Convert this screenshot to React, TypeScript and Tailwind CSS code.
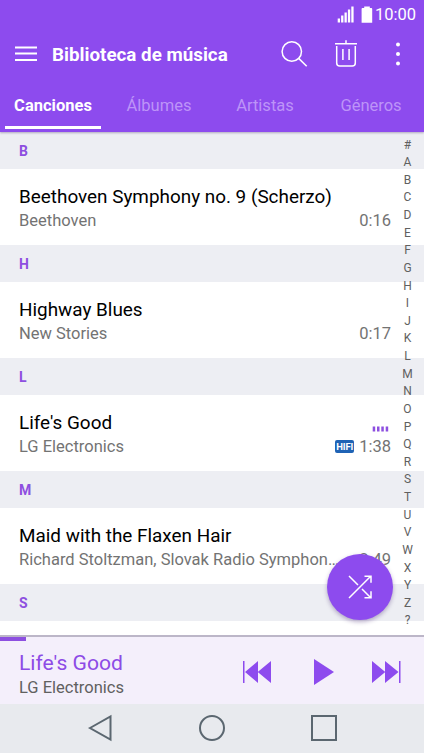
type Song = {
  letter: string;
  title: string;
  artist: string;
  duration: string;
  hifi?: boolean;
  playing?: boolean;
};

const songs: Song[] = [
  { letter: "B", title: "Beethoven Symphony no. 9 (Scherzo)", artist: "Beethoven", duration: "0:16" },
  { letter: "H", title: "Highway Blues", artist: "New Stories", duration: "0:17" },
  { letter: "L", title: "Life's Good", artist: "LG Electronics", duration: "1:38", hifi: true, playing: true },
  { letter: "M", title: "Maid with the Flaxen Hair", artist: "Richard Stoltzman, Slovak Radio Symphon…", duration: "2:49" },
];

const tabs = ["Canciones", "Álbumes", "Artistas", "Géneros"];

const indexLetters = "#ABCDEFGHIJKLMNOPQRSTUVWXYZ?".split("");

function StatusBar() {
  return (
    <div className="flex h-[30px] items-center justify-end pr-2 text-white">
      <svg width="18" height="18" viewBox="0 0 18 18" fill="currentColor">
        <path d="M0.7 12.500h2.300v4H0.700zM4.100 9.500h2.300v7H4.100zM7.500 6.500h2.300v10H7.500zM10.900 3.500h2.300v13h-2.300zM14.300 0.500h2.300v16h-2.300z" />
      </svg>
      <svg className="ml-[6px]" width="12" height="18" viewBox="0 0 12 18" fill="currentColor">
        <path d="M3.2 .5h5.6v1.6h1.6q.8 0 .8.8V16.700H.6V2.900q0-.8.8-.8h1.8z" />
      </svg>
      <span className="ml-[2px] text-[16.5px] leading-[30px]">10:00</span>
    </div>
  );
}

function Toolbar() {
  return (
    <div className="flex h-12 items-center pl-[15px] text-white">
      <svg width="22" height="16" viewBox="0 0 22 16" stroke="currentColor" strokeWidth="2">
        <path d="M0 1.500h22M0 7.500h22M0 14h22" />
      </svg>
      <h1 className="ml-[15px] flex-1 pt-0.5 text-[18.8px] font-bold">Biblioteca de música</h1>
      <svg width="28" height="28" viewBox="0 0 28 28" fill="none" stroke="currentColor" strokeWidth="1.5">
        <circle cx="11.8" cy="11.5" r="9.7" />
        <path d="M18.7 18.4l8 7.8" />
      </svg>
      <svg className="ml-[26px]" width="24" height="28" viewBox="0 0 24 28" fill="none" stroke="currentColor" strokeWidth="1.5">
        <path d="M1 3.7h22M12 0.3v3.4M2.7 6v17q0 3 3 3h12.600q3 0 3-3V6M8.900 9v11M15.100 9v11" />
      </svg>
      <svg className="mr-[23px] ml-[37px]" width="6" height="24" viewBox="0 0 6 24" fill="currentColor">
        <circle cx="3" cy="2.500" r="2" />
        <circle cx="3" cy="12" r="2" />
        <circle cx="3" cy="21.500" r="2" />
      </svg>
    </div>
  );
}

function Tabs() {
  return (
    <nav className="grid h-[54px] grid-cols-4 text-[16.5px]">
      {tabs.map((tab, i) => (
        <div
          key={tab}
          className={
            i === 0
              ? "relative text-center leading-[55px] font-bold text-white"
              : "relative text-center leading-[55px] text-[#bd94f8]"
          }
        >
          {tab}
          {i === 0 && <span className="absolute bottom-[4px] left-[5px] h-[3px] w-24 bg-white" />}
        </div>
      ))}
    </nav>
  );
}

function SectionHeader({ letter }: { letter: string }) {
  return (
    <div className="h-[37px] bg-[#edeef3] pl-[19px] text-[14px] leading-[38px] font-bold text-[#8d4fe0]">
      {letter}
    </div>
  );
}

function SongRow({ song }: { song: Song }) {
  return (
    <div className="h-[76px] pt-4 pr-[33px] pl-[19px]">
      <div className="text-[18.900px] leading-6 whitespace-nowrap text-black">{song.title}</div>
      <div className="flex items-center text-[16.5px] leading-[23px] whitespace-nowrap text-[#737373]">
        <span>{song.artist}</span>
        <span className="relative ml-auto flex shrink-0 items-center">
          {song.playing && (
            <svg className="absolute -top-[9px] right-[2px]" width="17" height="6" viewBox="0 0 17 6" fill="#8d4fe0">
              <path d="M0.700 .5h2.500v5H0.700zM5 .5h2.500v5H5zM9.300 .5h2.500v5H9.300zM13.700 .5h2.500v5h-2.500z" />
            </svg>
          )}
          {song.hifi && (
            <span className="mr-[5px] h-[13px] w-[19px] rounded-[2px] bg-[#1f63b5] text-center text-[9.500px] leading-[13px] font-bold tracking-[-0.100px] text-white">
              HIFI
            </span>
          )}
          {song.duration}
        </span>
      </div>
    </div>
  );
}

function IndexBar() {
  return (
    <div className="absolute top-[4.500px] right-[6px] flex w-[21px] flex-col text-center text-[12px] text-[#606060]">
      {indexLetters.map((letter) => (
        <span key={letter} className="h-[17.640px] leading-[17.640px]">
          {letter}
        </span>
      ))}
    </div>
  );
}

function ShuffleButton() {
  return (
    <button className="absolute top-[421.500px] left-[327.300px] flex h-[66px] w-[66px] items-center justify-center rounded-full bg-[#8d4bee] text-white shadow-[0_2px_4px_rgba(60,30,110,0.35)]">
      <svg width="24" height="24" viewBox="0 0 24 24" fill="none" stroke="currentColor" strokeWidth="1.5">
        <path d="M1 1l9 9M14 14l8.500 8.500M1 23L22.700 1.300M16.500 1.200h6.500v6.500M16.500 22.800h6.500v-6.500" />
      </svg>
    </button>
  );
}

function Player() {
  return (
    <div className="relative h-[69px] border-t-2 border-[#bcb6c8] bg-[#f4effb]">
      <div className="absolute top-0 left-0 h-1 w-[26px] bg-[#8d4fe0]" />
      <div className="flex items-center">
        <div className="flex-1 pt-3 pl-[19px]">
          <div className="text-[21.100px] leading-[27px] text-[#8d4be6]">Life's Good</div>
          <div className="text-[16.5px] leading-6 text-[#606060]">LG Electronics</div>
        </div>
        <div className="flex items-center pt-[6px] pr-[23px] text-[#8d4bee]">
          <svg width="29" height="22" viewBox="0 0 29 22" fill="currentColor">
            <path d="M0 0h1.500v22H0zM2 11L15 0v22zM14.700 11L28 0v22z" />
          </svg>
          <svg className="ml-[42px]" width="20" height="26" viewBox="0 0 20 26" fill="currentColor">
            <path d="M0 0l20 13L0 26z" />
          </svg>
          <svg className="ml-[38px]" width="29" height="22" viewBox="0 0 29 22" fill="currentColor">
            <path d="M28.500 0h-1.500v22h1.500zM26.500 11L13 0v22zM13.300 11L0 0v22z" />
          </svg>
        </div>
      </div>
    </div>
  );
}

function NavigationBar() {
  return (
    <div className="flex h-[49px] items-center justify-center gap-[84px] bg-[#e8eaee] pb-px text-[#5b6770]">
      <svg width="28" height="28" viewBox="0 0 28 28" fill="none" stroke="currentColor" strokeWidth="2">
        <path d="M4 14L24.500 2.500v23z" />
      </svg>
      <svg width="28" height="28" viewBox="0 0 28 28" fill="none" stroke="currentColor" strokeWidth="2">
        <circle cx="14" cy="14" r="12" />
      </svg>
      <svg width="28" height="28" viewBox="0 0 28 28" fill="none" stroke="currentColor" strokeWidth="2">
        <rect x="2" y="2" width="24" height="24" />
      </svg>
    </div>
  );
}

export default function App() {
  return (
    <div className="flex h-[753px] w-[424px] flex-col overflow-hidden bg-white font-[Roboto,sans-serif]">
      <header className="relative z-10 h-[132px] shrink-0 bg-[#8d4bee] shadow-[0_1px_2px_rgba(60,40,90,0.35)]">
        <StatusBar />
        <Toolbar />
        <Tabs />
      </header>
      <main className="relative h-[503px] shrink-0 overflow-hidden">
        {songs.map((song) => (
          <section key={song.letter}>
            <SectionHeader letter={song.letter} />
            <SongRow song={song} />
          </section>
        ))}
        <SectionHeader letter="S" />
        <IndexBar />
        <ShuffleButton />
      </main>
      <Player />
      <NavigationBar />
    </div>
  );
}
